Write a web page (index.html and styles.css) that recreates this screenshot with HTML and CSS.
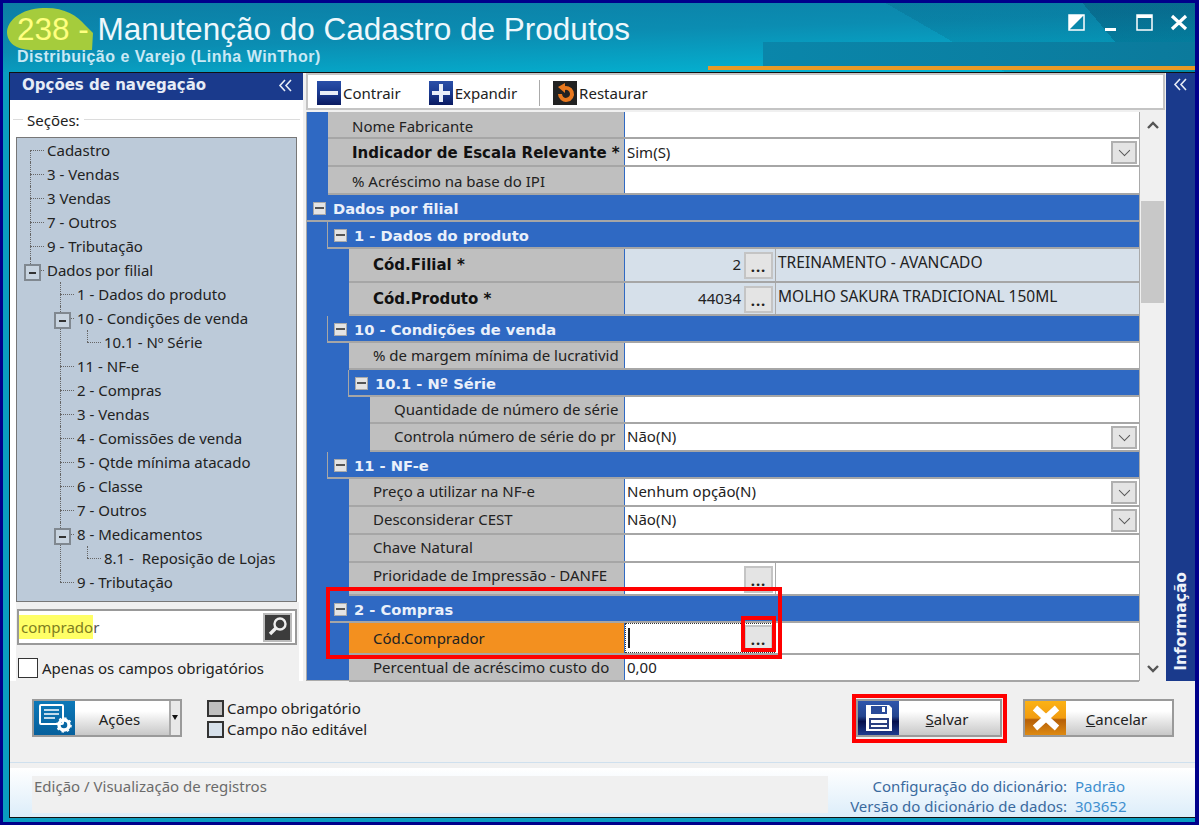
FILE: index.html
```html
<!DOCTYPE html>
<html>
<head>
    <meta charset="utf-8">
    <title>Manutenção do Cadastro de Produtos</title>
    <link rel="stylesheet" href="styles.css">
</head>
<body>
<div class="window">
    <div class="titlebar">
        <svg class="blob" width="100" height="50" viewBox="0 0 100 50"><path d="M2 27C2 14 16 3 38 2C58 1 72 9 80 19L88 27L87 44H28C14 44 3 39 2 27Z" fill="#a5cc3c"/></svg>
        <div class="title-text">
            <h1 class="title"><span class="title-num">238 - </span>Manutenção do Cadastro de Produtos</h1>
            <div class="subtitle">Distribuição e Varejo (Linha WinThor)</div>
        </div>
        <div class="win-btns">
            <svg width="17" height="17" viewBox="0 0 17 17"><rect x="1" y="1" width="15" height="15" fill="none" stroke="#fff" stroke-width="1.5"/><path d="M1 1H16L1 16Z" fill="#fff"/></svg>
            <svg width="17" height="17" viewBox="0 0 17 17"><rect x="3" y="14" width="11" height="3" fill="#fff"/></svg>
            <svg width="17" height="17" viewBox="0 0 17 17"><rect x="1" y="1" width="15" height="15" fill="none" stroke="#fff" stroke-width="1.5"/><rect x="1" y="1" width="15" height="3" fill="#fff"/></svg>
            <svg width="18" height="17" viewBox="0 0 18 17"><path d="M2 2L16 15M16 2L2 15" stroke="#fff" stroke-width="3.2"/></svg>
        </div>
    </div>

    <div class="client">
        <div class="main">
            <div class="nav">
                <div class="nav-head">
                    <span>Opções de navegação</span>
                    <svg class="collapse" width="15" height="13" viewBox="0 0 15 13"><path d="M7 1L2 6.5L7 12M13 1L8 6.5L13 12" fill="none" stroke="#e6ecf6" stroke-width="1.6"/></svg>
                </div>
                <div class="nav-body">
                    <div class="sections">
                        <div class="sections-label">Seções:</div>
                        <ul class="tree">
                            <li><span class="node">Cadastro</span></li>
                            <li><span class="node">3 - Vendas</span></li>
                            <li><span class="node">3 Vendas</span></li>
                            <li><span class="node">7 - Outros</span></li>
                            <li><span class="node">9 - Tributação</span></li>
                            <li><span class="node open">Dados por filial</span>
                                <ul>
                                    <li><span class="node">1 - Dados do produto</span></li>
                                    <li><span class="node open">10 - Condições de venda</span>
                                        <ul><li><span class="node">10.1 - Nº Série</span></li></ul>
                                    </li>
                                    <li><span class="node">11 - NF-e</span></li>
                                    <li><span class="node">2 - Compras</span></li>
                                    <li><span class="node">3 - Vendas</span></li>
                                    <li><span class="node">4 - Comissões de venda</span></li>
                                    <li><span class="node">5 - Qtde mínima atacado</span></li>
                                    <li><span class="node">6 - Classe</span></li>
                                    <li><span class="node">7 - Outros</span></li>
                                    <li><span class="node open">8 - Medicamentos</span>
                                        <ul><li><span class="node">8.1 -  Reposição de Lojas</span></li></ul>
                                    </li>
                                    <li><span class="node">9 - Tributação</span></li>
                                </ul>
                            </li>
                        </ul>
                    </div>
                    <div class="search">
                        <div class="search-box">
                            <span class="search-text"><span class="hl">comprado</span>r</span>
                            <span class="search-btn">
                                <svg width="22" height="22" viewBox="0 0 22 22"><circle cx="13" cy="8" r="5.5" fill="none" stroke="#eee" stroke-width="2.4"/><path d="M9 12L3 18" stroke="#eee" stroke-width="3.4"/></svg>
                            </span>
                        </div>
                        <label class="only-req"><span class="check"></span>Apenas os campos obrigatórios</label>
                    </div>
                </div>
            </div>

            <div class="content">
                <div class="toolbar">
                    <span class="tool">
                        <svg width="24" height="24" viewBox="0 0 24 24"><rect width="24" height="24" fill="url(#navy)"/><rect x="3" y="10" width="18" height="4" fill="#e8eef8"/></svg>Contrair
                    </span>
                    <span class="tool">
                        <svg width="24" height="24" viewBox="0 0 24 24"><rect width="24" height="24" fill="url(#navy)"/><path d="M10 3h4v7h7v4h-7v7h-4v-7H3v-4h7z" fill="#e8eef8"/></svg>Expandir
                    </span>
                    <span class="tool-sep"></span>
                    <span class="tool">
                        <svg width="24" height="24" viewBox="0 0 24 24"><rect width="24" height="24" fill="#222"/><path d="M9 6a8 8 0 1 1-4 7h4a4 4 0 1 0 3-4v3L5 6l7-4v4z" fill="#e8781e"/></svg>Restaurar
                    </span>
                    <svg class="defs" width="0" height="0"><defs><linearGradient id="navy" x1="0" y1="0" x2="0" y2="1"><stop offset="0" stop-color="#2a4fa8"/><stop offset=".5" stop-color="#1a3a90"/><stop offset="1" stop-color="#0a1a60"/></linearGradient></defs></svg>
                </div>

                <div class="grid-wrap">
                    <div class="grid">
                        <div class="body top">
                            <div class="row"><div class="lbl">Nome Fabricante</div><div class="val"></div></div>
                            <div class="row r28"><div class="lbl req">Indicador de Escala Relevante *</div><div class="val">Sim(S)<span class="combo"></span></div></div>
                            <div class="row r28"><div class="lbl">% Acréscimo na base do IPI</div><div class="val"></div></div>
                        </div>

                        <div class="head"><span class="box"></span>Dados por filial</div>
                        <div class="body">
                            <div class="head"><span class="box"></span>1 - Dados do produto</div>
                            <div class="body">
                                <div class="row r34"><div class="lbl req">Cód.Filial *</div><div class="val locked"><span class="num">2</span><span class="dots">...</span><span class="desc">TREINAMENTO - AVANCADO</span></div></div>
                                <div class="row r33"><div class="lbl req">Cód.Produto *</div><div class="val locked"><span class="num">44034</span><span class="dots">...</span><span class="desc">MOLHO SAKURA TRADICIONAL 150ML</span></div></div>
                            </div>

                            <div class="head"><span class="box"></span>10 - Condições de venda</div>
                            <div class="body">
                                <div class="row"><div class="lbl">% de margem mínima de lucrativid</div><div class="val"></div></div>
                                <div class="head"><span class="box"></span>10.1 - Nº Série</div>
                                <div class="body">
                                    <div class="row"><div class="lbl">Quantidade de número de série</div><div class="val"></div></div>
                                    <div class="row r28"><div class="lbl">Controla número de série do pr</div><div class="val">Não(N)<span class="combo"></span></div></div>
                                </div>
                            </div>

                            <div class="head"><span class="box"></span>11 - NF-e</div>
                            <div class="body">
                                <div class="row r28"><div class="lbl">Preço a utilizar na NF-e</div><div class="val">Nenhum opção(N)<span class="combo"></span></div></div>
                                <div class="row r28"><div class="lbl">Desconsiderar CEST</div><div class="val">Não(N)<span class="combo"></span></div></div>
                                <div class="row r28"><div class="lbl">Chave Natural</div><div class="val"></div></div>
                                <div class="row r33"><div class="lbl">Prioridade de Impressão - DANFE</div><div class="val"><span class="num"></span><span class="dots">...</span><span class="desc"></span></div></div>
                            </div>

                            <div class="head"><span class="box"></span>2 - Compras</div>
                            <div class="body">
                                <div class="row r32"><div class="lbl focus">Cód.Comprador</div><div class="val"><span class="edit-box"><span class="caret"></span><span class="dots">...</span></span></div></div>
                                <div class="row"><div class="lbl">Percentual de acréscimo custo do</div><div class="val">0,00</div></div>
                            </div>
                        </div>
                    </div>
                    <div class="scrollbar">
                        <svg width="14" height="10" viewBox="0 0 14 10"><path d="M2 8L7 3L12 8" fill="none" stroke="#555" stroke-width="2.4"/></svg>
                        <div class="track"><div class="thumb"></div></div>
                        <svg width="14" height="10" viewBox="0 0 14 10"><path d="M2 2L7 7L12 2" fill="none" stroke="#555" stroke-width="2.4"/></svg>
                    </div>
                </div>
            </div>

            <div class="info">
                <svg class="collapse" width="15" height="13" viewBox="0 0 15 13"><path d="M7 1L2 6.5L7 12M13 1L8 6.5L13 12" fill="none" stroke="#e6ecf6" stroke-width="1.6"/></svg>
                <span class="info-text">Informação</span>
            </div>
        </div>

        <div class="actions">
            <div class="btn btn-acoes">
                <span class="btn-icon ic-blue">
                    <svg width="34" height="32" viewBox="0 0 34 32"><rect x="2" y="3" width="23" height="19" rx="1" fill="none" stroke="#fff" stroke-width="2"/><path d="M6 8h15M6 12h15M6 16h11" stroke="#fff" stroke-width="1.6"/><circle cx="26" cy="23" r="5" fill="none" stroke="#fff" stroke-width="3.4"/><circle cx="26" cy="23" r="7" fill="none" stroke="#fff" stroke-width="1.6" stroke-dasharray="2.4 3.1"/></svg>
                </span>
                <span class="btn-label">Ações</span>
                <span class="btn-drop"></span>
            </div>
            <div class="legend">
                <div class="legend-item"><span class="swatch"></span>Campo obrigatório</div>
                <div class="legend-item"><span class="swatch locked"></span>Campo não editável</div>
            </div>
            <div class="btn btn-salvar">
                <span class="btn-icon ic-navy">
                    <svg width="30" height="30" viewBox="0 0 30 30"><path d="M2 2H25L28 5V28H2Z" fill="#fff"/><rect x="7" y="3" width="16" height="8" fill="#2a4b9a"/><rect x="18" y="4" width="3" height="5" fill="#fff"/><rect x="5" y="15" width="20" height="11" fill="#2a3f80"/><rect x="7" y="17" width="16" height="3" fill="#fff"/><rect x="7" y="22" width="16" height="2" fill="#fff"/></svg>
                </span>
                <span class="btn-label"><u>S</u>alvar</span>
            </div>
            <div class="btn btn-cancelar">
                <span class="btn-icon ic-orange">
                    <svg width="30" height="26" viewBox="0 0 30 26"><path d="M4 3L26 23M26 3L4 23" stroke="#fff" stroke-width="6.5"/></svg>
                </span>
                <span class="btn-label"><u>C</u>ancelar</span>
            </div>
        </div>

        <div class="status">
            <div class="status-msg">Edição / Visualização de registros</div>
            <div class="status-dict">
                <div class="dict-row"><span class="dict-key">Configuração do dicionário:</span><span class="dict-val">Padrão</span></div>
                <div class="dict-row"><span class="dict-key">Versão do dicionário de dados:</span><span class="dict-val">303652</span></div>
            </div>
        </div>
    </div>

    <div class="mark mark-group"></div>
    <div class="mark mark-dots"></div>
    <div class="mark mark-save"></div>
</div>
</body>
</html>
```

FILE: styles.css
```css
*
{
    box-sizing: border-box;
}
body
{
    margin: 0;
    font-family: "Noto Sans", sans-serif;
    font-size: 15px;
    color: #222;
}
.window
{
    position: relative;
    width: 1199px;
    height: 825px;
    border-style: solid;
    border-color: #00008b;
    border-width: 3px 4px 3px 3px;
    background: #0a9cc0;
    display: flex;
    flex-direction: column;
    overflow: hidden;
}

/* title bar */
.titlebar
{
    position: relative;
    height: 69px;
    flex: none;
    display: flex;
    justify-content: space-between;
    background:
        linear-gradient(#e79a26, #e79a26) right 0 bottom 2px / 487px 4px no-repeat,
        linear-gradient(90deg, #0a86aa, #0b7a9c) right 0 bottom 6px / 432px 24px no-repeat,
        linear-gradient(50deg, transparent 91%, rgba(0, 50, 80, .25) 91%),
        linear-gradient(30deg, transparent 76.4%, rgba(0, 60, 90, .14) 76.4%),
        linear-gradient(178deg, #0c7da4 0%, #0b8db2 45%, #02bbd9 100%);
}
.blob
{
    position: absolute;
    left: 2px;
    top: 3px;
}
.title-text
{
    position: relative;
    padding: 7px 0 0 14px;
}
.title
{
    margin: 0;
    font-family: "Liberation Sans", sans-serif;
    font-size: 31.5px;
    font-weight: normal;
    line-height: 38px;
    color: #eef8fc;
    white-space: nowrap;
}
.title-num
{
    color: #ffff80;
}
.subtitle
{
    margin: 0;
    font-family: "Liberation Sans", sans-serif;
    font-size: 16px;
    font-weight: bold;
    letter-spacing: .5px;
    color: #c9e9f5;
}
.win-btns
{
    display: flex;
    gap: 17px;
    padding: 11px 7px 0 0;
    align-items: flex-start;
}

/* main frame */
.client
{
    flex: none;
    height: 746px;
    margin-left: 6px;
    border-left: 1px solid #111;
    border-top: 1px solid #111;
    border-bottom: 1px solid #111;
    background: #f0f0f0;
    display: flex;
    flex-direction: column;
}
.main
{
    height: 608px;
    display: flex;
    flex: none;
}

/* left side */
.nav
{
    width: 293px;
    flex: none;
    margin-right: 3px;
    display: flex;
    flex-direction: column;
}
.nav-head
{
    height: 27px;
    flex: none;
    background: #1a3a8c;
    color: #e6ecf6;
    font-family: "DejaVu Sans", sans-serif;
    font-size: 15px;
    font-weight: bold;
    padding: 3px 10px 0 12px;
    display: flex;
    justify-content: space-between;
}
.collapse
{
    flex: none;
    margin-top: 3px;
}
.nav-body
{
    flex: 1;
    background: #fff;
    display: flex;
    flex-direction: column;
}
.sections
{
    height: 502px;
    padding: 9px 6px 0 6px;
    flex: none;
}
.sections-label
{
    height: 28px;
    margin: 0 -3px;
    line-height: 22px;
    display: flex;
    gap: 4px;
}
.sections-label::before,
.sections-label::after
{
    content: "";
    height: 10px;
    border-bottom: 1px solid #dcdcdc;
}
.sections-label::before
{
    width: 10px;
}
.sections-label::after
{
    flex: 1;
}
.tree
{
    height: 465px;
    margin: 0;
    padding: 0 0 0 13px;
    list-style: none;
    background: #bccad9;
    border: 1px solid #777;
}
.tree ul
{
    margin: 0 0 0 13px;
    padding: 0;
    list-style: none;
}
.tree ul ul
{
    margin-left: 10px;
}
.tree li
{
    position: relative;
    padding-left: 17px;
}
.tree li::before
{
    content: "";
    position: absolute;
    left: 0;
    top: 0;
    height: 100%;
    border-left: 1px dotted #666;
}
.tree > li:first-child::before
{
    top: 12px;
    height: calc(100% - 12px);
}
.tree li:last-child::before
{
    height: 12px;
}
.node
{
    position: relative;
    display: block;
    height: 24px;
    line-height: 24px;
    white-space: pre;
}
.node::before
{
    content: "";
    position: absolute;
    left: -17px;
    top: 12px;
    width: 14px;
    border-top: 1px dotted #666;
}
.open::after
{
    content: "";
    position: absolute;
    left: -23px;
    top: 6px;
    width: 13px;
    height: 13px;
    border: 2px solid #808890;
    background: linear-gradient(#333, #333) center / 7px 2px no-repeat, #c8d4e0;
}
.search
{
    flex: 1;
    background: #f0f0f0;
    margin: 0 4px 0 6px;
    padding: 7px 2px 0 1px;
}
.search-box
{
    height: 36px;
    border: 2px solid #999;
    background: #fff;
    display: flex;
    align-items: center;
    justify-content: space-between;
    padding-right: 3px;
}
.search-text
{
    height: 24px;
    line-height: 24px;
    color: #555;
}
.hl
{
    background: #ffff66;
    color: #7d7d20;
    display: inline-block;
    padding-left: 2px;
}
.search-btn
{
    width: 29px;
    height: 29px;
    background: #3c3c3c;
    border: 2px solid #bbb;
    display: flex;
    align-items: center;
    justify-content: center;
}
.only-req
{
    display: flex;
    align-items: center;
    gap: 4px;
    margin-top: 13px;
    padding-left: 1px;
}
.check
{
    width: 20px;
    height: 20px;
    background: #fff;
    border: 1px solid #333;
}

/* toolbar */
.content
{
    width: 859px;
    flex: none;
    display: flex;
    flex-direction: column;
}
.toolbar
{
    height: 37px;
    flex: none;
    margin-bottom: 2px;
    background: #fff;
    border: 2px solid #c4c4c4;
    display: flex;
    align-items: center;
    padding: 2px 0 0 9px;
}
.tool
{
    display: flex;
    align-items: center;
    gap: 2px;
    margin-right: 28px;
}
.tool-sep
{
    width: 1px;
    height: 26px;
    background: #aaa;
    margin: 0 13px 0 -6px;
}
.defs
{
    position: absolute;
}

/* property grid */
.grid-wrap
{
    flex: 1;
    display: flex;
    min-height: 0;
}
.grid
{
    width: 834px;
    flex: none;
    background: #2f69c3;
    border-left: 1px solid #aaa;
    border-right: 1px solid #aaa;
    border-bottom: 1px solid #aaa;
}
.body
{
    margin-left: 21px;
}
.head
{
    height: 27px;
    border-bottom: 2px solid #a6a6a6;
    display: flex;
    align-items: center;
    gap: 7px;
    padding: 1px 0 0 6px;
    font-family: "DejaVu Sans", sans-serif;
    font-size: 14.7px;
    font-weight: bold;
    color: #eaf0fa;
    margin-left: -1px;
}
.grid > .head
{
    margin-left: 0;
}
.body > .head
{
    border-left: 1px solid #a6a6a6;
}
.box
{
    width: 13px;
    height: 13px;
    flex: none;
    border: 1px solid #aaa;
    background: linear-gradient(#555, #555) center / 9px 2px no-repeat, #e4e4e4;
}
.row
{
    height: 27px;
    display: flex;
    border-bottom: 2px solid #a6a6a6;
}
.r28
{
    height: 28px;
}
.r32
{
    height: 32px;
}
.r33
{
    height: 33px;
}
.r34
{
    height: 34px;
}
.lbl
{
    flex: 1;
    min-width: 0;
    background: #bfbfbf;
    padding: 0 4px 0 24px;
    white-space: nowrap;
    overflow: hidden;
    line-height: 25px;
}
.top .lbl
{
    line-height: 28px;
}
.req
{
    font-family: "DejaVu Sans", sans-serif;
    font-size: 15px;
    font-weight: bold;
    color: #111;
    line-height: 27px;
    padding-right: 0;
}
.r33 .req,
.r34 .req
{
    line-height: 32px;
}
.focus
{
    background: #f3901f;
    line-height: 30px;
}
.val
{
    width: 514px;
    flex: none;
    background: #fff;
    margin-left: 1px;
    padding-left: 2px;
    display: flex;
    position: relative;
    line-height: 25px;
    white-space: nowrap;
}
.top .val
{
    line-height: 26px;
}
.locked
{
    background: #d6e0ea;
}
.combo
{
    position: absolute;
    right: 2px;
    top: 2px;
    width: 26px;
    height: 23px;
    border: 2px solid #b0b0b0;
    background: #e4e4e4;
}
.combo::after
{
    content: "";
    position: absolute;
    left: 7px;
    top: 3px;
    width: 8px;
    height: 8px;
    border-right: 1.5px solid #555;
    border-bottom: 1.5px solid #555;
    transform: rotate(45deg) scale(.9);
}
.num
{
    width: 114px;
    flex: none;
    text-align: right;
    padding-top: 3px;
}
.dots
{
    width: 29px;
    height: 27px;
    flex: none;
    margin: 3px 0 0 3px;
    border: 2px solid #c4c4c4;
    background: #e4e4e4;
    text-align: center;
    line-height: 24px;
    font-weight: bold;
    letter-spacing: 1px;
}
.desc
{
    margin-left: 2px;
    padding-left: 2px;
    border-left: 1px solid #aaa;
    font-size: 15.5px;
    line-height: 26px;
    flex: 1;
}
.edit-box
{
    width: 150px;
    height: 30px;
    margin-left: -2px;
    border: 1px dotted #333;
    display: flex;
    justify-content: space-between;
    padding-right: 1px;
}
.edit-box .dots
{
    margin-top: 1px;
}
.caret
{
    width: 2px;
    height: 20px;
    margin: 4px 0 0 2px;
    background: #222;
}
.scrollbar
{
    flex: 1;
    display: flex;
    flex-direction: column;
    align-items: center;
    padding: 8px 0 7px;
}
.track
{
    flex: 1;
    width: 100%;
    padding: 71px 1px 0;
}
.thumb
{
    height: 102px;
    background: #c8c8c8;
}

/* right strip */
.info
{
    flex: 1;
    margin-left: 1px;
    background: #1a3a8c;
    display: flex;
    flex-direction: column;
    align-items: center;
    justify-content: space-between;
    padding: 2px 0 10px;
}
.info-text
{
    writing-mode: vertical-rl;
    transform: rotate(180deg);
    font-family: "DejaVu Sans", sans-serif;
    font-size: 15.5px;
    font-weight: bold;
    color: #eef2fa;
}

/* bottom buttons */
.actions
{
    height: 82px;
    flex: none;
    display: flex;
    align-items: flex-start;
    padding: 18px 0 0 22px;
    border-bottom: 1px solid #cfe0ee;
}
.btn
{
    height: 38px;
    display: flex;
    border: 2px solid #9a9a9a;
    background: linear-gradient(#fff 30%, #e6e6e6 60%, #c8c8c8);
}
.btn-icon
{
    width: 41px;
    flex: none;
    display: flex;
    align-items: center;
    justify-content: center;
}
.ic-blue
{
    background: linear-gradient(#0c78b8, #07609c);
}
.ic-navy
{
    background: linear-gradient(#2f55ac 0%, #24458f 45%, #050f4c 60%, #1f3c8e);
}
.ic-orange
{
    background: linear-gradient(#fbb215 0%, #f29c10 50%, #b55f08 55%, #de8a12);
}
.btn-label
{
    flex: 1;
    text-align: center;
    line-height: 36px;
    padding-right: 5px;
}
.btn-acoes
{
    width: 150px;
}
.btn-drop
{
    width: 11px;
    flex: none;
    border-left: 2px solid #aaa;
    background: #e8e8e8;
    position: relative;
}
.btn-drop::after
{
    content: "";
    position: absolute;
    left: 1px;
    top: 14px;
    border: 3px solid transparent;
    border-top: 5px solid #111;
}
.legend
{
    margin: -1px 0 0 25px;
}
.legend-item
{
    height: 21px;
    display: flex;
    align-items: center;
    gap: 3px;
    line-height: 21px;
}
.swatch
{
    width: 17px;
    height: 17px;
    flex: none;
    background: #bfbfbf;
    border: 2px solid #333;
}
.swatch.locked
{
    background: #d6e0ea;
}
.btn-salvar
{
    width: 146px;
    margin-left: auto;
}
.btn-cancelar
{
    width: 151px;
    margin: 0 21px 0 21px;
}

/* status bar */
.status
{
    flex: 1;
    display: flex;
    padding-top: 8px;
    background: linear-gradient(#fff, #dcedfa);
    border-top: 5px solid #f0f0f0;
}
.status-msg
{
    width: 796px;
    height: 37px;
    margin-left: 22px;
    background: #f0f0f0;
    color: #6b6b6b;
    padding-left: 2px;
    line-height: 20px;
}
.status-dict
{
    flex: 1;
    padding-right: 66px;
    line-height: 20px;
}
.dict-row
{
    display: flex;
    justify-content: flex-end;
    gap: 8px;
}
.dict-key
{
    color: #3a6a9e;
}
.dict-val
{
    width: 54px;
    color: #3f8fcf;
}

/* red marks put over the screenshot */
.mark
{
    position: absolute;
    border: 4px solid #f00;
}
.mark-group
{
    left: 323px;
    top: 584px;
    width: 456px;
    height: 72px;
}
.mark-dots
{
    left: 738px;
    top: 613px;
    width: 35px;
    height: 36px;
}
.mark-save
{
    left: 849px;
    top: 691px;
    width: 155px;
    height: 49px;
}
```
